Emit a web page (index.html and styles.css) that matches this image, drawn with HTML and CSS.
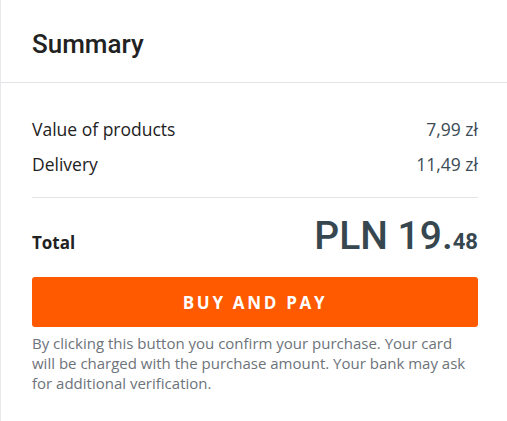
FILE: index.html
```html
<!DOCTYPE html>
<html>
<head>
<meta charset="utf-8">
<link rel="stylesheet" href="styles.css">
</head>
<body>
<div class="card">
  <div class="card-header">
    <h2 class="title">Summary</h2>
  </div>
  <div class="card-body">
    <div class="rows">
      <div class="row"><span class="label">Value of products</span><span class="value">7,99 zł</span></div>
      <div class="row"><span class="label">Delivery</span><span class="value">11,49 zł</span></div>
    </div>
    <div class="total">
      <span class="total-label">Total</span>
      <span class="total-value">PLN 19.<span class="cents">48</span></span>
    </div>
    <button class="buy">BUY AND PAY</button>
    <p class="note">By clicking this button you confirm your purchase. Your card will be charged with the purchase amount. Your bank may ask for additional verification.</p>
  </div>
</div>
</body>
</html>
```

FILE: styles.css
```css
html, body {
  margin: 0;
  padding: 0;
  background: #fff;
}
.card {
  border-left: 1px solid #e6e8eb;
  min-height: 421px;
  box-sizing: border-box;
  font-family: "Open Sans", sans-serif;
}
.card-header {
  height: 83px;
  box-sizing: border-box;
  border-bottom: 1px solid #e2e4e7;
  padding: 29px 30px 0 31px;
}
.title {
  margin: 0;
  font-family: Roboto, sans-serif;
  font-weight: 500;
  font-size: 26px;
  line-height: 30px;
  color: #222;
}
.card-body {
  padding: 34px 29px 0 31px;
}
.rows {
  display: flex;
  flex-direction: column;
  gap: 11px;
  padding-bottom: 21px;
  border-bottom: 1px solid #e2e4e7;
}
.row {
  display: flex;
  justify-content: space-between;
  font-size: 17.5px;
  line-height: 24px;
}
.label {
  color: #222;
}
.value {
  color: #3b4b56;
}
.total {
  display: flex;
  justify-content: space-between;
  align-items: baseline;
  padding-top: 14px;
  height: 64px;
  box-sizing: border-box;
}
.total-label {
  font-weight: 700;
  font-size: 17px;
  color: #222;
}
.total-value {
  font-family: Roboto, sans-serif;
  font-weight: 500;
  font-size: 39px;
  color: #37474f;
  line-height: 48px;
}
.cents {
  font-size: 22px;
  font-weight: 700;
}
.buy {
  display: block;
  width: 100%;
  height: 50px;
  margin-top: 15px;
  border: 0;
  border-radius: 3px;
  background: #ff5a00;
  color: #fff;
  font-family: "Open Sans", sans-serif;
  font-weight: 700;
  font-size: 17px;
  letter-spacing: 2.7px;
}
.note {
  margin: 6px 0 0;
  font-size: 15px;
  line-height: 20px;
  color: #6d737a;
}
```
